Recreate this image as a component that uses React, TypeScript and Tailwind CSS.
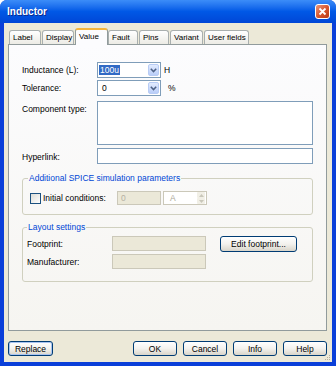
import React from 'react'

const TABS = [
  { name: 'Label', cls: 'w-[32px]' },
  { name: 'Display', cls: 'ml-[1px] w-[32px]' },
  { name: 'Value', cls: 'ml-[1px] w-[33px]', active: true },
  { name: 'Fault', cls: 'w-[30px]' },
  { name: 'Pins', cls: 'ml-[1px] w-[30px]' },
  { name: 'Variant', cls: 'ml-[1px] w-[33px]' },
  { name: 'User fields', cls: 'ml-[1px] w-[45px]' },
]

function Chevron() {
  return (
    <svg width="7" height="5" viewBox="0 0 7 5">
      <path d="M0.8 0.8 L3.5 3.6 L6.2 0.8" stroke="#4D6185" strokeWidth="1.5" fill="none" />
    </svg>
  )
}

function Combo({ value, selected }: { value: string; selected?: boolean }) {
  return (
    <div className="flex h-[16px] w-[64px] items-center border border-[#7F9DB9] bg-white pl-[1px]">
      <span className={selected ? 'bg-[#316AC5] px-[1px] text-white' : 'px-[3px]'}>{value}</span>
      <div className="ml-auto mr-[1px] flex h-[12px] w-[11px] items-center justify-center rounded-[2px] border border-[#B8CCF5] bg-gradient-to-b from-[#E2EBFE] to-[#B9CDF8]">
        <Chevron />
      </div>
    </div>
  )
}

function XpButton({ label, cls, focused }: { label: string; cls: string; focused?: boolean }) {
  return (
    <div
      className={`flex items-center justify-center rounded-[3px] border border-[#003C74] bg-gradient-to-b from-white via-[#F3F2EE] to-[#D9D5CA] ${cls} ${
        focused ? 'shadow-[inset_0_0_0_1px_#A9C4F0]' : ''
      }`}
    >
      {label}
    </div>
  )
}

function DisabledField({ cls, text }: { cls: string; text?: string }) {
  return (
    <div className={`flex items-center border border-[#CBC8B9] bg-[#EBE8D8] px-[3px] text-[#B5B1A3] ${cls}`}>
      {text}
    </div>
  )
}

export default function App() {
  return (
    <div className="flex h-[366px] w-[336px] flex-col overflow-hidden rounded-t-[7px] bg-[#0A3FD9] font-['Liberation_Sans',Arial,sans-serif] text-[8.5px] leading-[10px] text-black">
      {/* Title bar */}
      <div className="flex h-[23px] items-center justify-between bg-gradient-to-b from-[#3C8DF8] via-[#0058E6] to-[#0046D6] pl-[7px] pr-[6px]">
        <span className="text-[10px] font-bold text-white [text-shadow:1px_1px_0_#0A2A8F]">Inductor</span>
        <div className="flex h-[15px] w-[15px] items-center justify-center rounded-[3px] border border-white bg-gradient-to-br from-[#E8957A] via-[#D8582F] to-[#B93A16]">
          <svg width="9" height="9" viewBox="0 0 9 9">
            <path d="M1.5 1.5 L7.5 7.5 M7.5 1.5 L1.5 7.5" stroke="white" strokeWidth="1.8" />
          </svg>
        </div>
      </div>

      {/* Client area */}
      <div className="relative mx-[4px] mb-[4px] flex flex-1 flex-col bg-[#ECE9D8] pt-[5px]">
        {/* Tabs */}
        <div className="ml-[5px] flex h-[16px] items-end text-[8px]">
          {TABS.map((t) =>
            t.active ? (
              <div
                key={t.name}
                className={`relative z-10 -mb-[1px] h-[17px] whitespace-nowrap rounded-t-[3px] border-x border-t-2 border-x-[#919B9C] border-t-[#F5B53C] bg-[#FCFCFE] px-[3px] pt-[2px] ${t.cls}`}
              >
                {t.name}
              </div>
            ) : (
              <div
                key={t.name}
                className={`h-[14px] whitespace-nowrap rounded-t-[3px] border border-b-0 border-[#A9AFAF] bg-gradient-to-b from-white to-[#ECEBE5] px-[3px] pt-[2px] ${t.cls}`}
              >
                {t.name}
              </div>
            )
          )}
        </div>

        {/* Tab panel */}
        <div className="ml-[4px] mr-[5px] h-[287px] border border-[#919B9C] bg-gradient-to-b from-[#FCFCFE] to-[#F6F5F1] px-[13px] pt-[17px]">
          <div className="flex h-[16px] items-center">
            <span className="w-[75px]">Inductance (L):</span>
            <Combo value="100u" selected />
            <span className="ml-[3px]">H</span>
          </div>
          <div className="mt-[2px] flex h-[16px] items-center">
            <span className="w-[75px]">Tolerance:</span>
            <Combo value="0" />
            <span className="ml-[7px]">%</span>
          </div>
          <div className="mt-[5px] flex items-start">
            <span className="w-[75px] pt-[3px]">Component type:</span>
            <div className="h-[44px] flex-1 border border-[#7F9DB9] bg-white" />
          </div>
          <div className="mt-[3px] flex h-[16px] items-center">
            <span className="w-[75px] pt-[2px]">Hyperlink:</span>
            <div className="h-[16px] flex-1 border border-[#7F9DB9] bg-white" />
          </div>

          {/* SPICE group */}
          <fieldset className="mt-[9px] rounded-[3px] border border-[#D0D0BF] px-[7px] pb-[9px]">
            <legend className="-ml-[2px] px-[1px] text-[#0046D5]">Additional SPICE simulation parameters</legend>
            <div className="mt-[8px] flex h-[14px] items-center">
              <div className="flex w-[87px] items-center">
                <div className="h-[11px] w-[11px] border border-[#1C5180] bg-gradient-to-br from-[#DCDCD6] to-white" />
                <span className="ml-[2px]">Initial conditions:</span>
              </div>
              <DisabledField cls="h-[14px] w-[44px]" text="0" />
              <div className="ml-[2px] flex h-[14px] w-[44px] items-center border border-[#CBC8B9] bg-white pl-[6px] text-[#ACA899]">
                A
                <div className="ml-auto mr-[1px] flex h-[12px] w-[8px] flex-col">
                  <div className="flex flex-1 items-center justify-center rounded-[1px] bg-[#F1EFE6]">
                    <svg width="5" height="3" viewBox="0 0 5 3">
                      <path d="M0 3 L2.5 0 L5 3 Z" fill="#C9C7BA" />
                    </svg>
                  </div>
                  <div className="flex flex-1 items-center justify-center rounded-[1px] bg-[#F1EFE6]">
                    <svg width="5" height="3" viewBox="0 0 5 3">
                      <path d="M0 0 L2.5 3 L5 0 Z" fill="#C9C7BA" />
                    </svg>
                  </div>
                </div>
              </div>
            </div>
          </fieldset>

          {/* Layout group */}
          <fieldset className="mt-[7px] rounded-[3px] border border-[#D0D0BF] px-[4px] pb-[12px]">
            <legend className="px-[1px] text-[#0046D5]">Layout settings</legend>
            <div className="mt-[3px] flex h-[17px] items-center">
              <span className="w-[85px]">Footprint:</span>
              <DisabledField cls="h-[15px] w-[94px]" />
              <XpButton label="Edit footprint..." cls="ml-[14px] h-[16px] w-[77px]" />
            </div>
            <div className="mt-[2px] flex h-[15px] items-center">
              <span className="w-[85px]">Manufacturer:</span>
              <DisabledField cls="h-[15px] w-[94px]" />
            </div>
          </fieldset>
        </div>

        {/* Dialog buttons */}
        <div className="mt-[10px] flex h-[15px] pl-[4px] pr-[5px]">
          <XpButton label="Replace" cls="w-[45px]" focused />
          <div className="ml-auto flex gap-[6px]">
            <XpButton label="OK" cls="w-[44px]" />
            <XpButton label="Cancel" cls="w-[44px]" />
            <XpButton label="Info" cls="w-[44px]" />
            <XpButton label="Help" cls="w-[44px]" />
          </div>
        </div>

        {/* Size grip */}
        <svg className="absolute bottom-[1px] right-[1px]" width="8" height="8" viewBox="0 0 8 8">
          <rect x="6" y="2" width="1" height="1" fill="#B5B0A0" />
          <rect x="4" y="4" width="1" height="1" fill="#B5B0A0" />
          <rect x="6" y="4" width="1" height="1" fill="#B5B0A0" />
          <rect x="2" y="6" width="1" height="1" fill="#B5B0A0" />
          <rect x="4" y="6" width="1" height="1" fill="#B5B0A0" />
          <rect x="6" y="6" width="1" height="1" fill="#B5B0A0" />
        </svg>
      </div>
    </div>
  )
}
